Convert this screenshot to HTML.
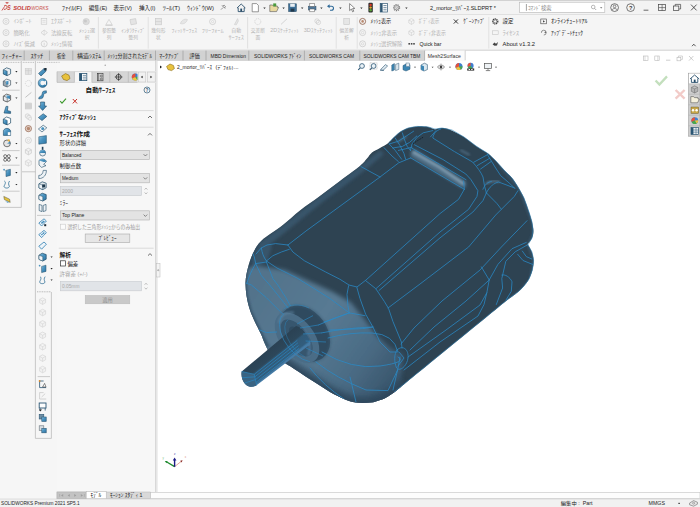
<!DOCTYPE html>
<html lang="ja">
<head>
<meta charset="utf-8">
<title>SOLIDWORKS Premium 2021 - 2_mortor_ﾘﾊﾞｰｽ.SLDPRT</title>
<style>
html,body{margin:0;padding:0;background:#fff;}
body{width:700px;height:507px;overflow:hidden;position:relative;font-family:"Liberation Sans", "Noto Sans CJK JP", sans-serif;}
#app{position:absolute;left:0;top:0;width:700px;height:507px;display:block;}
#app text{font-family:"Liberation Sans", "Noto Sans CJK JP", sans-serif;white-space:pre;}
</style>
</head>
<body>
<svg id="app" width="700" height="507" viewBox="0 0 700 507">
<defs><linearGradient id="gb" x1="0" y1="0" x2="1" y2="1"><stop offset="0" stop-color="#8cc3e2"/><stop offset="0.45" stop-color="#4a93c0"/><stop offset="1" stop-color="#2d74a2"/></linearGradient></defs>
<rect x="0" y="0" width="700" height="507" fill="#ffffff" />
<rect x="0" y="0" width="700" height="15" fill="#f3f3f3" />
<line x1="0" y1="0.4" x2="700" y2="0.4" stroke="#c4c4c4" stroke-width="0.8" />
<line x1="0" y1="14.8" x2="700" y2="14.8" stroke="#cfcfcf" stroke-width="0.8" />
<rect x="0" y="15.2" width="700" height="35" fill="#f5f5f5" />
<line x1="0" y1="50.2" x2="700" y2="50.2" stroke="#bdbdbd" stroke-width="0.7" />
<path d="M1.9 10.5 L4.7 6.3" fill="none" stroke="#c53a35" stroke-width="0.8" />
<path d="M4.3 5.6 L5.9 5.4 C7.5 5.5 7.5 8.9 5.3 9.2 L3.9 9.4" fill="none" stroke="#c53a35" stroke-width="0.9" />
<path d="M5.3 2.2 L8.7 2.2 L8 3.5 L6.3 3.5 Z" fill="#c53a35" />
<text x="7.2" y="9.8" font-size="6.4" fill="#c53a35" font-weight="bold" textLength="3.4" lengthAdjust="spacingAndGlyphs" font-style="italic">S</text>
<text x="13.2" y="9.61" font-size="5.3" fill="#c53a35" font-weight="bold" textLength="17.6" lengthAdjust="spacingAndGlyphs" font-style="italic">SOLID</text>
<text x="31.3" y="9.61" font-size="5.3" fill="#c9514c" textLength="17.2" lengthAdjust="spacingAndGlyphs" font-style="italic">WORKS</text>
<text x="61.8" y="10.03" font-size="6.2" fill="#1d1d1d" textLength="20.4" lengthAdjust="spacingAndGlyphs" >ﾌｧｲﾙ(F)</text>
<text x="88.8" y="10.03" font-size="6.2" fill="#1d1d1d" textLength="18.4" lengthAdjust="spacingAndGlyphs" >編集(E)</text>
<text x="113.5" y="10.03" font-size="6.2" fill="#1d1d1d" textLength="18.4" lengthAdjust="spacingAndGlyphs" >表示(V)</text>
<text x="139" y="10.03" font-size="6.2" fill="#1d1d1d" textLength="16.4" lengthAdjust="spacingAndGlyphs" >挿入(I)</text>
<text x="162.8" y="10.03" font-size="6.2" fill="#1d1d1d" textLength="17.4" lengthAdjust="spacingAndGlyphs" >ﾂｰﾙ(T)</text>
<text x="187" y="10.03" font-size="6.2" fill="#1d1d1d" textLength="27" lengthAdjust="spacingAndGlyphs" >ｳｨﾝﾄﾞｳ(W)</text>
<path d="M221 9.6 L223 7.6 M222 5.4 L225.2 8.6 M222.6 6 L224.2 5.2 L225.4 6.4 L224.6 8" fill="none" stroke="#555" stroke-width="0.6" />
<path d="M237.2 7.8 L241.2 4 L245.2 7.8 L244.2 7.8 L244.2 11.6 L238.2 11.6 L238.2 7.8 Z" fill="#f3f3f3" stroke="#2b4f6b" stroke-width="0.9" />
<rect x="240.3" y="8.6" width="1.8" height="3" fill="#2b4f6b" />
<path d="M252.2 3.6 L256.6 3.6 L258.4 5.4 L258.4 11.8 L252.2 11.8 Z" fill="#fff" stroke="#555" stroke-width="0.6" />
<path d="M263.3 7.6 L265.7 7.6 L264.5 9.0 Z" fill="#333" />
<path d="M269.8 11.6 L269.8 5 L272.6 5 L273.4 6 L277.4 6 L277.4 7.4 L278.6 7.4 L276.6 11.6 Z" fill="#e9d9a0" stroke="#555" stroke-width="0.6" />
<path d="M273.2 3.4 L276.2 3.4 L276.2 6.4 L273.2 6.4 Z" fill="#4c9a3c" />
<path d="M282.40000000000003 7.6 L284.8 7.6 L283.6 9.0 Z" fill="#333" />
<rect x="288.6" y="3.8" width="7.8" height="7.8" fill="#3c6f97" stroke="#27475f" stroke-width="0.5" />
<rect x="290.2" y="3.8" width="4.6" height="3" fill="#e8eef3" />
<rect x="290.6" y="8.6" width="3.8" height="3" fill="#20384b" />
<path d="M301.0 7.6 L303.4 7.6 L302.2 9.0 Z" fill="#333" />
<rect x="308.4" y="6.2" width="7.6" height="3.8" fill="#50789a" stroke="#2f4d66" stroke-width="0.5" />
<rect x="309.8" y="3.6" width="4.8" height="2.8" fill="#fff" stroke="#555" stroke-width="0.5" />
<rect x="309.8" y="9" width="4.8" height="2.8" fill="#fff" stroke="#555" stroke-width="0.5" />
<path d="M320.2 7.6 L322.59999999999997 7.6 L321.4 9.0 Z" fill="#333" />
<path d="M328 6.2 L331.4 6.2 C334.2 6.2 334.2 10.2 331.4 10.2 L330 10.2" fill="none" stroke="#2f6a99" stroke-width="1.1" />
<path d="M329.6 4.2 L327 6.2 L329.6 8.2 Z" fill="#2f6a99" />
<path d="M339.2 7.6 L341.59999999999997 7.6 L340.4 9.0 Z" fill="#333" />
<path d="M349.6 3.6 L349.6 10.6 L351.4 9 L352.6 11.8 L353.8 11.2 L352.6 8.6 L354.8 8.4 Z" fill="#fff" stroke="#444" stroke-width="0.6" />
<path d="M360.2 7.6 L362.59999999999997 7.6 L361.4 9.0 Z" fill="#333" />
<rect x="368.4" y="2.8" width="4.4" height="9.6" fill="#2d2d2d" rx="1" />
<circle cx="370.6" cy="5" r="1.2" fill="#d93a2b" />
<circle cx="370.6" cy="7.6" r="1.2" fill="#e0a32a" />
<circle cx="370.6" cy="10.2" r="1.2" fill="#58a33a" />
<rect x="380.2" y="3.4" width="7.2" height="8.6" fill="#fff" stroke="#2f5673" stroke-width="0.7" />
<rect x="380.2" y="3.4" width="2.4" height="8.6" fill="#2f5673" />
<line x1="383.4" y1="5.6" x2="386.6" y2="5.6" stroke="#2f5673" stroke-width="0.7" />
<line x1="383.4" y1="7.7" x2="386.6" y2="7.7" stroke="#2f5673" stroke-width="0.7" />
<line x1="383.4" y1="9.8" x2="386.6" y2="9.8" stroke="#2f5673" stroke-width="0.7" />
<circle cx="396.6" cy="7.7" r="3" fill="none" stroke="#7a7a7a" stroke-width="1.2" stroke-dasharray="1.2 0.9"/>
<circle cx="396.6" cy="7.7" r="2.2" fill="#f3f3f3" stroke="#7a7a7a" stroke-width="0.7" />
<circle cx="396.6" cy="7.7" r="0.9" fill="none" stroke="#7a7a7a" stroke-width="0.5" />
<path d="M405.2 7.6 L407.59999999999997 7.6 L406.4 9.0 Z" fill="#333" />
<text x="430" y="10.13" font-size="6.2" fill="#222" textLength="66" lengthAdjust="spacingAndGlyphs" >2_mortor_ﾘﾊﾞｰｽ.SLDPRT *</text>
<rect x="519.4" y="2.2" width="85.4" height="10.2" fill="#ffffff" stroke="#b5b5b5" stroke-width="0.6" />
<line x1="526.4" y1="4" x2="526.4" y2="10.8" stroke="#444" stroke-width="0.5" />
<text x="528" y="9.62" font-size="5.6" fill="#8a8a8a" textLength="23.5" lengthAdjust="spacingAndGlyphs" >ｺﾏﾝﾄﾞ検索</text>
<circle cx="593.2" cy="7" r="1.8" fill="none" stroke="#8a8a8a" stroke-width="0.6" />
<line x1="594.5" y1="8.3" x2="596.2" y2="10" stroke="#8a8a8a" stroke-width="0.7" />
<path d="M600.0 7.2 L602.4000000000001 7.2 L601.2 8.6 Z" fill="#666" />
<circle cx="614.6" cy="7.6" r="3.9" fill="none" stroke="#444" stroke-width="0.7" />
<circle cx="614.6" cy="6.4" r="1.3" fill="none" stroke="#444" stroke-width="0.6" />
<path d="M612.2 10 C612.6 8 616.6 8 617 10" fill="none" stroke="#444" stroke-width="0.6" />
<circle cx="630.6" cy="7.6" r="3.9" fill="none" stroke="#444" stroke-width="0.7" />
<text x="630.6" y="9.82" font-size="5.6" fill="#333" text-anchor="middle" font-weight="bold" >?</text>
<line x1="643.6" y1="10.2" x2="648.4" y2="10.2" stroke="#444" stroke-width="0.8" />
<rect x="658.6" y="4.6" width="7" height="6" fill="none" stroke="#444" stroke-width="0.7" />
<line x1="662.1" y1="4.6" x2="662.1" y2="10.6" stroke="#444" stroke-width="0.6" />
<line x1="658.6" y1="7.6" x2="665.6" y2="7.6" stroke="#444" stroke-width="0.6" />
<rect x="673.6" y="6" width="5.2" height="4.6" fill="#f3f3f3" stroke="#444" stroke-width="0.7" />
<path d="M675.2 6 L675.2 4.4 L680.6 4.4 L680.6 9 L678.8 9" fill="none" stroke="#444" stroke-width="0.7" />
<path d="M691 4.6 L696.6 10.4 M696.6 4.6 L691 10.4" fill="none" stroke="#333" stroke-width="0.8" />
<circle cx="6" cy="21.4" r="3" fill="none" stroke="#c6c6c6" stroke-width="0.7" />
<circle cx="6" cy="21.4" r="1.2" fill="none" stroke="#c6c6c6" stroke-width="0.5" />
<text x="13.4" y="23.31" font-size="5.3" fill="#b4b4b4" textLength="18.2" lengthAdjust="spacingAndGlyphs" >ｲﾝﾎﾟｰﾄ</text>
<circle cx="6" cy="32.6" r="3" fill="none" stroke="#c6c6c6" stroke-width="0.7" />
<circle cx="6" cy="32.6" r="1.2" fill="none" stroke="#c6c6c6" stroke-width="0.5" />
<text x="13.4" y="34.51" font-size="5.3" fill="#b4b4b4" textLength="16.4" lengthAdjust="spacingAndGlyphs" >簡略化</text>
<circle cx="6" cy="43.8" r="3" fill="none" stroke="#c6c6c6" stroke-width="0.7" />
<circle cx="6" cy="43.8" r="1.2" fill="none" stroke="#c6c6c6" stroke-width="0.5" />
<text x="13.4" y="45.71" font-size="5.3" fill="#b4b4b4" textLength="21.5" lengthAdjust="spacingAndGlyphs" >ﾉｲｽﾞ低減</text>
<rect x="41.2" y="18.6" width="5.6" height="5.6" fill="none" stroke="#c6c6c6" stroke-width="0.6" />
<line x1="42.4" y1="20.4" x2="45.6" y2="20.4" stroke="#c6c6c6" stroke-width="0.5" />
<line x1="42.4" y1="22.2" x2="45.6" y2="22.2" stroke="#c6c6c6" stroke-width="0.5" />
<path d="M41 32.6 L44.2 30 L47.4 32.6 L44.2 35.2 Z" fill="none" stroke="#c6c6c6" stroke-width="0.6" />
<line x1="44.2" y1="30" x2="44.2" y2="35.2" stroke="#c6c6c6" stroke-width="0.5" />
<circle cx="44.2" cy="43.8" r="3" fill="none" stroke="#c6c6c6" stroke-width="0.7" />
<line x1="44.2" y1="42.8" x2="44.2" y2="45.6" stroke="#c6c6c6" stroke-width="0.6" />
<text x="51" y="23.31" font-size="5.3" fill="#b4b4b4" textLength="20.6" lengthAdjust="spacingAndGlyphs" >ｴｸｽﾎﾟｰﾄ</text>
<text x="51" y="34.51" font-size="5.3" fill="#b4b4b4" textLength="21.4" lengthAdjust="spacingAndGlyphs" >法線反転</text>
<text x="51" y="45.71" font-size="5.3" fill="#b4b4b4" textLength="21.4" lengthAdjust="spacingAndGlyphs" >ﾒｯｼｭ情報</text>
<circle cx="86.2" cy="21.6" r="3.2" fill="#dcdcdc" stroke="#c6c6c6" stroke-width="0.5" />
<circle cx="85.4" cy="21" r="1.6" fill="#c9c9c9" />
<text x="87" y="32.4" font-size="5.0" fill="#b4b4b4" text-anchor="middle" textLength="16.1" lengthAdjust="spacingAndGlyphs" >ﾒｯｼｭ選</text>
<text x="87" y="38.5" font-size="5.0" fill="#b4b4b4" text-anchor="middle" textLength="4.7" lengthAdjust="spacingAndGlyphs" >択</text>
<line x1="98.4" y1="17" x2="98.4" y2="48.6" stroke="#d9d9d9" stroke-width="0.7" />
<path d="M105.8 24.8 L112.2 24.8 L109 19.4 Z" fill="none" stroke="#c6c6c6" stroke-width="0.6" />
<line x1="105.4" y1="25.4" x2="112.6" y2="25.4" stroke="#c6c6c6" stroke-width="0.7" />
<text x="109" y="32.4" font-size="5.0" fill="#b4b4b4" text-anchor="middle" textLength="14.1" lengthAdjust="spacingAndGlyphs" >参照整</text>
<text x="109" y="38.5" font-size="5.0" fill="#b4b4b4" text-anchor="middle" textLength="4.7" lengthAdjust="spacingAndGlyphs" >列</text>
<path d="M130 19.6 L135.6 18.6 L136.6 23.8 L131 24.8 Z" fill="#e4e4e4" stroke="#c6c6c6" stroke-width="0.6" />
<text x="133.2" y="32.4" font-size="5.0" fill="#b4b4b4" text-anchor="middle" textLength="23.7" lengthAdjust="spacingAndGlyphs" >ｲﾝﾀﾗｸﾃｨﾌﾞ</text>
<text x="133.2" y="38.5" font-size="5.0" fill="#b4b4b4" text-anchor="middle" textLength="9.5" lengthAdjust="spacingAndGlyphs" >整列</text>
<line x1="148.2" y1="17" x2="148.2" y2="48.6" stroke="#d9d9d9" stroke-width="0.7" />
<rect x="155.4" y="18.4" width="6" height="6.4" fill="#e6e6e6" stroke="#c6c6c6" stroke-width="0.6" />
<line x1="155.4" y1="21.6" x2="161.4" y2="21.6" stroke="#c6c6c6" stroke-width="0.5" />
<text x="158.4" y="32.4" font-size="5.0" fill="#b4b4b4" text-anchor="middle" textLength="14.1" lengthAdjust="spacingAndGlyphs" >幾何形</text>
<text x="158.4" y="38.5" font-size="5.0" fill="#b4b4b4" text-anchor="middle" textLength="4.7" lengthAdjust="spacingAndGlyphs" >状</text>
<path d="M180.4 23.6 C181.4 19.6 185.4 18.6 187.4 19.6 C186.4 22.6 184 24.6 180.4 23.6 Z" fill="#e6e6e6" stroke="#c6c6c6" stroke-width="0.5" />
<text x="184.3" y="32.4" font-size="5.0" fill="#b4b4b4" text-anchor="middle" textLength="25.7" lengthAdjust="spacingAndGlyphs" >ﾌｨｯﾄｻｰﾌｪｽ</text>
<circle cx="212.6" cy="21.6" r="3" fill="none" stroke="#c6c6c6" stroke-width="0.7" />
<circle cx="212.6" cy="21.6" r="1.1" fill="none" stroke="#c6c6c6" stroke-width="0.5" />
<text x="212.7" y="32.4" font-size="5.0" fill="#b4b4b4" text-anchor="middle" textLength="21.8" lengthAdjust="spacingAndGlyphs" >ﾌﾘｰﾌｫｰﾑ</text>
<path d="M234.4 24.6 L237.6 18.6 L238.4 21 L236.4 24.8 Z" fill="#e6e6e6" stroke="#c6c6c6" stroke-width="0.5" />
<text x="236.2" y="32.4" font-size="5.0" fill="#b4b4b4" text-anchor="middle" textLength="9.8" lengthAdjust="spacingAndGlyphs" >自動</text>
<text x="236.2" y="38.5" font-size="5.0" fill="#b4b4b4" text-anchor="middle" textLength="15.5" lengthAdjust="spacingAndGlyphs" >ｻｰﾌｪｽ</text>
<line x1="247.6" y1="17" x2="247.6" y2="48.6" stroke="#d9d9d9" stroke-width="0.7" />
<circle cx="257.8" cy="21.6" r="3" fill="none" stroke="#c6c6c6" stroke-width="0.7" stroke-dasharray="1.1 0.9"/>
<text x="257.8" y="32.4" font-size="5.0" fill="#b4b4b4" text-anchor="middle" textLength="14.1" lengthAdjust="spacingAndGlyphs" >交差断</text>
<text x="257.8" y="38.5" font-size="5.0" fill="#b4b4b4" text-anchor="middle" textLength="4.7" lengthAdjust="spacingAndGlyphs" >面</text>
<line x1="281" y1="24.4" x2="287" y2="18.8" stroke="#c6c6c6" stroke-width="0.7" />
<text x="284.6" y="32.4" font-size="5.0" fill="#b4b4b4" text-anchor="middle" textLength="28.6" lengthAdjust="spacingAndGlyphs" >2Dｽｹｯﾁﾌｨｯﾄ</text>
<circle cx="317" cy="21" r="2.2" fill="none" stroke="#c6c6c6" stroke-width="0.6" />
<circle cx="318.4" cy="22.4" r="2.2" fill="none" stroke="#c6c6c6" stroke-width="0.6" />
<text x="318.4" y="32.4" font-size="5.0" fill="#b4b4b4" text-anchor="middle" textLength="29.2" lengthAdjust="spacingAndGlyphs" >3Dｽｹｯﾁﾌｨｯﾄ</text>
<line x1="336.2" y1="17" x2="336.2" y2="48.6" stroke="#d9d9d9" stroke-width="0.7" />
<rect x="343.8" y="18.6" width="5.6" height="6" fill="#e6e6e6" stroke="#c6c6c6" stroke-width="0.6" />
<text x="346.6" y="32.4" font-size="5.0" fill="#b4b4b4" text-anchor="middle" textLength="14.1" lengthAdjust="spacingAndGlyphs" >偏差解</text>
<text x="346.6" y="38.5" font-size="5.0" fill="#b4b4b4" text-anchor="middle" textLength="4.7" lengthAdjust="spacingAndGlyphs" >析</text>
<line x1="357.2" y1="17" x2="357.2" y2="48.6" stroke="#d9d9d9" stroke-width="0.7" />
<circle cx="362.6" cy="21.4" r="3" fill="none" stroke="#8a5a44" stroke-width="0.8" />
<circle cx="362.6" cy="21.4" r="1.3" fill="#b98a70" />
<text x="370.6" y="23.42" font-size="5.6" fill="#222222" textLength="20.6" lengthAdjust="spacingAndGlyphs" >ﾒｯｼｭ表示</text>
<circle cx="362.6" cy="32.6" r="3" fill="none" stroke="#c6c6c6" stroke-width="0.7" />
<circle cx="362.6" cy="32.6" r="1.2" fill="none" stroke="#c6c6c6" stroke-width="0.5" />
<text x="370.6" y="34.62" font-size="5.6" fill="#b4b4b4" textLength="26.4" lengthAdjust="spacingAndGlyphs" >ﾒｯｼｭ非表示</text>
<circle cx="362.6" cy="43.8" r="3" fill="none" stroke="#c6c6c6" stroke-width="0.7" />
<circle cx="362.6" cy="43.8" r="1.2" fill="none" stroke="#c6c6c6" stroke-width="0.5" />
<text x="370.6" y="45.82" font-size="5.6" fill="#b4b4b4" textLength="31.6" lengthAdjust="spacingAndGlyphs" >ﾒｯｼｭ選択解除</text>
<path d="M408.79999999999995 20.0 L411.4 18.599999999999998 L414.0 20.0 L414.0 23.0 L411.4 24.4 L408.79999999999995 23.0 Z M408.79999999999995 20.0 L411.4 21.4 L414.0 20.0 M411.4 21.4 L411.4 24.4" fill="none" stroke="#c6c6c6" stroke-width="0.5" />
<text x="418.8" y="23.42" font-size="5.6" fill="#b4b4b4" textLength="20.6" lengthAdjust="spacingAndGlyphs" >ﾎﾞﾃﾞｨ表示</text>
<path d="M408.79999999999995 31.200000000000003 L411.4 29.8 L414.0 31.200000000000003 L414.0 34.2 L411.4 35.6 L408.79999999999995 34.2 Z M408.79999999999995 31.200000000000003 L411.4 32.6 L414.0 31.200000000000003 M411.4 32.6 L411.4 35.6" fill="none" stroke="#c6c6c6" stroke-width="0.5" />
<text x="418.8" y="34.62" font-size="5.6" fill="#b4b4b4" textLength="27" lengthAdjust="spacingAndGlyphs" >ﾎﾞﾃﾞｨ非表示</text>
<rect x="408.4" y="43.2" width="1.6" height="1.3" fill="#222" />
<rect x="410.8" y="43.2" width="1.6" height="1.3" fill="#222" />
<rect x="413.2" y="43.2" width="1.6" height="1.3" fill="#222" />
<text x="419.4" y="45.89" font-size="5.8" fill="#222222" textLength="22" lengthAdjust="spacingAndGlyphs" >Quick bar</text>
<path d="M453.8 19.4 L458 23.6 M458 19.4 L453.8 23.6" fill="none" stroke="#222" stroke-width="0.9" />
<text x="463.2" y="23.42" font-size="5.6" fill="#222222" textLength="22" lengthAdjust="spacingAndGlyphs" >ｹﾞｰﾝｱｯﾌﾟ</text>
<line x1="488.8" y1="17" x2="488.8" y2="48.6" stroke="#d9d9d9" stroke-width="0.7" />
<circle cx="495.2" cy="21.4" r="2.6" fill="none" stroke="#333" stroke-width="1.2" stroke-dasharray="1.1 0.8"/>
<circle cx="495.2" cy="21.4" r="1.7" fill="#f5f5f5" stroke="#333" stroke-width="0.6" />
<text x="502.6" y="23.42" font-size="5.6" fill="#222222" textLength="10.8" lengthAdjust="spacingAndGlyphs" >設定</text>
<rect x="492.4" y="30.8" width="5.8" height="3.6" fill="none" stroke="#c6c6c6" stroke-width="0.6" />
<text x="502.6" y="34.62" font-size="5.6" fill="#b4b4b4" textLength="16.4" lengthAdjust="spacingAndGlyphs" >ﾗｲｾﾝｽ</text>
<path d="M492.6 44.6 L494.4 42.4 L496 43.8 L498 42 L497 45.6 L494.6 45.8 Z" fill="#444" />
<text x="502.6" y="45.89" font-size="5.8" fill="#222222" textLength="32.4" lengthAdjust="spacingAndGlyphs" >About v1.3.2</text>
<rect x="540.8" y="19" width="5.8" height="4.8" fill="none" stroke="#444" stroke-width="0.6" />
<path d="M543 20.2 L545 21.4 L543 22.6 Z" fill="#444" />
<text x="551" y="23.42" font-size="5.6" fill="#222222" textLength="36.6" lengthAdjust="spacingAndGlyphs" >ｵﾝﾗｲﾝﾁｭｰﾄﾘｱﾙ</text>
<path d="M541.4 32.8 A2.4 2.4 0 1 1 543.8 35" fill="none" stroke="#666" stroke-width="0.7" />
<path d="M545.2 31 L546.4 33 L544.4 33 Z" fill="#666" />
<text x="551" y="34.62" font-size="5.6" fill="#222222" textLength="32" lengthAdjust="spacingAndGlyphs" >ｱｯﾌﾟﾃﾞｰﾄﾁｪｯｸ</text>
<path d="M692 46.2 L693.8 44.2 L695.6 46.2" fill="none" stroke="#333" stroke-width="0.8" />
<rect x="0" y="50.6" width="425" height="9.8" fill="#d2d2d2" />
<line x1="0" y1="60.5" x2="425" y2="60.5" stroke="#bdbdbd" stroke-width="0.5" />
<line x1="24.2" y1="50.6" x2="24.2" y2="60.4" stroke="#9e9e9e" stroke-width="0.7" />
<text x="1.6" y="57.72" font-size="5.6" fill="#1c1c1c" textLength="20.4" lengthAdjust="spacingAndGlyphs" >ﾌｨｰﾁｬｰ</text>
<line x1="49.4" y1="50.6" x2="49.4" y2="60.4" stroke="#9e9e9e" stroke-width="0.7" />
<text x="30.6" y="57.72" font-size="5.6" fill="#1c1c1c" textLength="12.6" lengthAdjust="spacingAndGlyphs" >ｽｹｯﾁ</text>
<line x1="72.8" y1="50.6" x2="72.8" y2="60.4" stroke="#9e9e9e" stroke-width="0.7" />
<text x="57" y="57.72" font-size="5.6" fill="#1c1c1c" textLength="8.6" lengthAdjust="spacingAndGlyphs" >板金</text>
<line x1="104.2" y1="50.6" x2="104.2" y2="60.4" stroke="#9e9e9e" stroke-width="0.7" />
<text x="77" y="57.72" font-size="5.6" fill="#1c1c1c" textLength="24.2" lengthAdjust="spacingAndGlyphs" >構造ｼｽﾃﾑ</text>
<line x1="155.5" y1="50.6" x2="155.5" y2="60.4" stroke="#9e9e9e" stroke-width="0.7" />
<text x="107.6" y="57.72" font-size="5.6" fill="#1c1c1c" textLength="44.4" lengthAdjust="spacingAndGlyphs" >ﾒｯｼｭ分割されたﾓﾃﾞﾙ</text>
<line x1="183" y1="50.6" x2="183" y2="60.4" stroke="#9e9e9e" stroke-width="0.7" />
<text x="159.2" y="57.72" font-size="5.6" fill="#1c1c1c" textLength="20.4" lengthAdjust="spacingAndGlyphs" >ﾏｰｸｱｯﾌﾟ</text>
<line x1="206" y1="50.6" x2="206" y2="60.4" stroke="#9e9e9e" stroke-width="0.7" />
<text x="189.3" y="57.72" font-size="5.6" fill="#1c1c1c" textLength="10.5" lengthAdjust="spacingAndGlyphs" >評価</text>
<line x1="248.8" y1="50.6" x2="248.8" y2="60.4" stroke="#9e9e9e" stroke-width="0.7" />
<text x="210.6" y="57.72" font-size="5.6" fill="#1c1c1c" textLength="35.4" lengthAdjust="spacingAndGlyphs" >MBD Dimension</text>
<line x1="304.4" y1="50.6" x2="304.4" y2="60.4" stroke="#9e9e9e" stroke-width="0.7" />
<text x="254" y="57.72" font-size="5.6" fill="#1c1c1c" textLength="47.3" lengthAdjust="spacingAndGlyphs" >SOLIDWORKS ｱﾄﾞｲﾝ</text>
<line x1="359.8" y1="50.6" x2="359.8" y2="60.4" stroke="#9e9e9e" stroke-width="0.7" />
<text x="309" y="57.72" font-size="5.6" fill="#1c1c1c" textLength="45" lengthAdjust="spacingAndGlyphs" >SOLIDWORKS CAM</text>
<line x1="424.8" y1="50.6" x2="424.8" y2="60.4" stroke="#9e9e9e" stroke-width="0.7" />
<text x="363.5" y="57.72" font-size="5.6" fill="#1c1c1c" textLength="56.9" lengthAdjust="spacingAndGlyphs" >SOLIDWORKS CAM TBM</text>
<rect x="425.3" y="50.6" width="39.8" height="10.4" fill="#fbfbfb" />
<line x1="465.2" y1="50.6" x2="465.2" y2="60.4" stroke="#b5b5b5" stroke-width="0.6" />
<text x="427.8" y="57.72" font-size="5.6" fill="#333" textLength="33" lengthAdjust="spacingAndGlyphs" >Mesh2Surface</text>
<rect x="0" y="60.8" width="157" height="438" fill="#f6f6f6" />
<line x1="1" y1="62.4" x2="20.4" y2="62.4" stroke="#9a9a9a" stroke-width="0.6" stroke-dasharray="1 0.7"/>
<line x1="22.8" y1="62.4" x2="34.6" y2="62.4" stroke="#9a9a9a" stroke-width="0.6" stroke-dasharray="1 0.7"/>
<line x1="37.2" y1="62.4" x2="60" y2="62.4" stroke="#9a9a9a" stroke-width="0.6" stroke-dasharray="1 0.7"/>
<line x1="21.3" y1="61" x2="21.3" y2="207.4" stroke="#b4b4b4" stroke-width="0.7" />
<line x1="0" y1="207.4" x2="21.3" y2="207.4" stroke="#b4b4b4" stroke-width="0.7" />
<line x1="35.4" y1="61" x2="35.4" y2="438.4" stroke="#b4b4b4" stroke-width="0.7" />
<line x1="22" y1="171.8" x2="35.4" y2="171.8" stroke="#b4b4b4" stroke-width="0.7" />
<line x1="35.4" y1="438.4" x2="51.4" y2="438.4" stroke="#b4b4b4" stroke-width="0.7" />
<line x1="51.4" y1="292" x2="51.4" y2="438.4" stroke="#b4b4b4" stroke-width="0.7" />
<path d="M3.4 69.8 L6.6 67.8 L10.6 69.19999999999999 L10.6 73.8 L7.2 75.6 L3.4 74.0 Z" fill="#e9eef2" stroke="#1f4a66" stroke-width="0.7" />
<path d="M3.4 69.8 L7.2 71.19999999999999 L7.2 75.6 L3.4 74.0 Z" fill="url(#gb)" stroke="#1f4a66" stroke-width="0.5" />
<path d="M15.299999999999999 71.1 L17.5 71.1 L16.4 72.39999999999999 Z" fill="#222" />
<path d="M3.4 81.10000000000001 L6.6 79.10000000000001 L10.6 80.5 L10.6 85.10000000000001 L7.2 86.9 L3.4 85.30000000000001 Z" fill="#e9eef2" stroke="#4a5a66" stroke-width="0.7" />
<path d="M3.4 81.10000000000001 L7.2 82.5 L7.2 86.9 L3.4 85.30000000000001 Z" fill="#9aa7b0" stroke="#4a5a66" stroke-width="0.5" />
<rect x="6" y="81" width="2.4" height="3.4" fill="url(#gb)" />
<path d="M15.299999999999999 82.4 L17.5 82.4 L16.4 83.7 Z" fill="#222" />
<line x1="2" y1="90.2" x2="19.6" y2="90.2" stroke="#b9b9b9" stroke-width="0.7" />
<path d="M3.4 96.10000000000001 L6.6 94.10000000000001 L10.6 95.5 L10.6 100.10000000000001 L7.2 101.9 L3.4 100.30000000000001 Z" fill="#e9eef2" stroke="#333" stroke-width="0.7" />
<path d="M3.4 96.10000000000001 L7.2 97.5 L7.2 101.9 L3.4 100.30000000000001 Z" fill="#e9eef2" stroke="#333" stroke-width="0.5" />
<path d="M6.4 95 L10 96 L10 99 L6.8 98 Z" fill="url(#gb)" />
<path d="M15.299999999999999 97.4 L17.5 97.4 L16.4 98.7 Z" fill="#222" />
<path d="M4 113 L6 106.4 L8 106.4 L7.4 110.6 L10.6 111.4 L10.6 113.4 Z" fill="url(#gb)" stroke="#1f4a66" stroke-width="0.6" />
<path d="M3.4 119.0 L6.6 117.0 L10.6 118.39999999999999 L10.6 123.0 L7.2 124.8 L3.4 123.2 Z" fill="#fff" stroke="#1f4a66" stroke-width="0.7" />
<path d="M3.4 119.0 L7.2 120.39999999999999 L7.2 124.8 L3.4 123.2 Z" fill="url(#gb)" stroke="#1f4a66" stroke-width="0.5" />
<path d="M3.4 135.4 L3.4 130.6 C5 127.6 9 127.6 10.6 130.8 L10.6 135.4 Z" fill="url(#gb)" stroke="#1f4a66" stroke-width="0.6" />
<rect x="7.8" y="132.2" width="2.6" height="3" fill="#fff" />
<circle cx="7" cy="143.4" r="3.4" fill="#e4e4e4" stroke="#444" stroke-width="0.7" />
<path d="M7 143.4 L10 141.4 L10.4 143.8 Z" fill="url(#gb)" />
<circle cx="8.8" cy="140.4" r="1.1" fill="#e9b23a" />
<path d="M15.299999999999999 142.9 L17.5 142.9 L16.4 144.20000000000002 Z" fill="#222" />
<line x1="2" y1="150.6" x2="19.6" y2="150.6" stroke="#b9b9b9" stroke-width="0.7" />
<circle cx="5.2" cy="156.2" r="1.5" fill="none" stroke="#3a3a3a" stroke-width="0.7" />
<circle cx="8.8" cy="156.2" r="1.5" fill="none" stroke="#3a3a3a" stroke-width="0.7" />
<circle cx="5.2" cy="159.8" r="1.5" fill="none" stroke="#3a3a3a" stroke-width="0.7" />
<circle cx="8.8" cy="159.8" r="1.5" fill="none" stroke="#3a3a3a" stroke-width="0.7" />
<path d="M15.299999999999999 157.5 L17.5 157.5 L16.4 158.8 Z" fill="#222" />
<line x1="2" y1="165.2" x2="19.6" y2="165.2" stroke="#b9b9b9" stroke-width="0.7" />
<path d="M6 170.4 L10.4 169.2 L10.4 175.4 L6 176.6 Z" fill="url(#gb)" stroke="#1f4a66" stroke-width="0.5" />
<circle cx="4" cy="169.6" r="0.9" fill="url(#gb)" />
<line x1="5" y1="170.4" x2="6" y2="171.4" stroke="#1f4a66" stroke-width="0.6" />
<path d="M15.299999999999999 172.1 L17.5 172.1 L16.4 173.4 Z" fill="#222" />
<path d="M4.4 181 C6.6 182.4 4.4 185 4 186.4 C4.4 188.6 9 188.6 9.4 186.4 C8.6 184.6 8 183 9.6 181" fill="none" stroke="#2f6e96" stroke-width="0.8" />
<path d="M15.299999999999999 183.9 L17.5 183.9 L16.4 185.20000000000002 Z" fill="#222" />
<line x1="2" y1="191.2" x2="19.6" y2="191.2" stroke="#b9b9b9" stroke-width="0.7" />
<path d="M3.8 196.4 L9.6 199.2 L10.2 202.4 L4.4 199.6 Z" fill="#e5c33a" stroke="#54503a" stroke-width="0.5" />
<path d="M5 201.4 L8.6 203 L8 201.6 Z" fill="url(#gb)" />
<rect x="25.2" y="68.6" width="6.4" height="5.8" fill="#e2e2e2" stroke="#c8c8c8" stroke-width="0.5" />
<line x1="25.2" y1="70.6" x2="31.599999999999998" y2="70.6" stroke="#c8c8c8" stroke-width="0.5" />
<line x1="28.4" y1="68.6" x2="28.4" y2="74.4" stroke="#c8c8c8" stroke-width="0.5" />
<circle cx="28.4" cy="83.4" r="3" fill="none" stroke="#c8c8c8" stroke-width="0.7" stroke-dasharray="1.2 0.9"/>
<line x1="25.4" y1="97.4" x2="31.4" y2="92.4" stroke="#aaa" stroke-width="0.7" />
<rect x="25.2" y="103" width="6.4" height="6" fill="#d8d8d8" stroke="#c8c8c8" stroke-width="0.5" />
<line x1="25.2" y1="105" x2="31.599999999999998" y2="105" stroke="#bbb" stroke-width="0.4" />
<line x1="25.2" y1="107" x2="31.599999999999998" y2="107" stroke="#bbb" stroke-width="0.4" />
<circle cx="27.4" cy="116" r="2.2" fill="#f0f0f0" stroke="#c8c8c8" stroke-width="0.6" />
<circle cx="29.0" cy="117.4" r="2.2" fill="#f0f0f0" stroke="#c8c8c8" stroke-width="0.6" />
<circle cx="30.0" cy="118.8" r="1.6" fill="#f0f0f0" stroke="#c8c8c8" stroke-width="0.5" />
<circle cx="28.4" cy="128.6" r="3.1" fill="#ecd9cf" stroke="#8a5a44" stroke-width="0.7" />
<circle cx="28.4" cy="128.6" r="1.4" fill="#b98a70" stroke="#8a5a44" stroke-width="0.4" />
<circle cx="28.4" cy="140.3" r="3" fill="none" stroke="#c8c8c8" stroke-width="0.7" />
<circle cx="28.4" cy="140.3" r="1.2" fill="none" stroke="#c8c8c8" stroke-width="0.5" />
<path d="M25.4 149.8 L28.4 148.20000000000002 L31.4 149.8 L31.4 153.20000000000002 L28.4 154.8 L25.4 153.20000000000002 Z M25.4 149.8 L28.4 151.4 L31.4 149.8 M28.4 151.4 L28.4 154.8" fill="#f1f1f1" stroke="#c4c4c4" stroke-width="0.6" />
<path d="M25.4 161.20000000000002 L28.4 159.60000000000002 L31.4 161.20000000000002 L31.4 164.60000000000002 L28.4 166.20000000000002 L25.4 164.60000000000002 Z M25.4 161.20000000000002 L28.4 162.8 L31.4 161.20000000000002 M28.4 162.8 L28.4 166.20000000000002" fill="#f1f1f1" stroke="#cfcfcf" stroke-width="0.6" />
<path d="M38.6 73.4 L44.0 68.6 L46.2 71 L41.0 76 Z" fill="url(#gb)" stroke="#1f4a66" stroke-width="0.6" />
<rect x="44.2" y="68" width="2.4" height="2.4" fill="#1c2c38" />
<circle cx="42.6" cy="83" r="3.4" fill="none" stroke="url(#gb)" stroke-width="2.2" />
<circle cx="42.6" cy="83" r="4.4" fill="none" stroke="#1f4a66" stroke-width="0.5" />
<path d="M41.6 83 L46.0 80.6 L46.0 85 Z" fill="#f6f6f6" />
<path d="M38.800000000000004 97.6 L40.6 96 C43.0 96 41.2 91.2 44.0 91 L46.4 90.8 L46.4 93 L44.6 93.4 C43.0 94 44.2 98 41.6 98.6 L38.800000000000004 99 Z" fill="url(#gb)" stroke="#1f4a66" stroke-width="0.5" />
<path d="M40.6 102 L44.6 102 L44.6 106 L46.6 106 L42.6 110.4 L38.6 106 L40.6 106 Z" fill="url(#gb)" stroke="#1f4a66" stroke-width="0.6" />
<path d="M38.4 117.6 L43.2 113.8 L46.800000000000004 116.4 L42.0 120.6 Z" fill="url(#gb)" stroke="#1f4a66" stroke-width="0.6" />
<path d="M38.4 129 L43.2 125.2 L46.800000000000004 127.8 L42.0 132 Z" fill="#f0f4f7" stroke="#1f4a66" stroke-width="0.6" />
<circle cx="42.6" cy="128.6" r="1.5" fill="url(#gb)" />
<path d="M38.800000000000004 136.8 L46.4 135.6 L46.4 143.2 L38.800000000000004 144.2 Z" fill="url(#gb)" stroke="#1f4a66" stroke-width="0.5" />
<circle cx="42.6" cy="153" r="3" fill="#e9eef2" stroke="#1f4a66" stroke-width="0.6" />
<path d="M39.6 153 A3 3 0 0 1 45.6 153 Z" fill="url(#gb)" />
<rect x="41.800000000000004" y="146.8" width="1.6" height="3" fill="#26445a" />
<path d="M39.0 160.4 C41.6 158 45.6 159 46.4 161.6 L43.6 164.4 L46.0 165.6 L41.6 167.4 L39.0 165 Z" fill="#eef2f5" stroke="#1f4a66" stroke-width="0.6" />
<path d="M39.0 160.4 C41.6 158 45.6 159 46.4 161.6 L44.0 162 Z" fill="url(#gb)" />
<path d="M38.800000000000004 178.6 L38.800000000000004 175.4 C41.6 175.6 43.0 173.4 43.2 170.4 L46.4 170.4 C46.4 175 43.6 178.6 38.800000000000004 178.6 Z" fill="#eef2f5" stroke="#1f4a66" stroke-width="0.6" />
<path d="M39.0 183.79999999999998 L42.2 181.79999999999998 L46.2 183.2 L46.2 187.79999999999998 L42.800000000000004 189.6 L39.0 188.0 Z" fill="#dfe6ea" stroke="#1f4a66" stroke-width="0.7" />
<path d="M39.0 183.79999999999998 L42.800000000000004 185.2 L42.800000000000004 189.6 L39.0 188.0 Z" fill="#eef2f5" stroke="#1f4a66" stroke-width="0.5" />
<rect x="42.2" y="184.4" width="3" height="3" fill="#1e394c" />
<path d="M39.0 195.2 L42.2 193.2 L46.2 194.6 L46.2 199.2 L42.800000000000004 201 L39.0 199.4 Z" fill="url(#gb)" stroke="#1f4a66" stroke-width="0.7" />
<path d="M39.0 195.2 L42.800000000000004 196.6 L42.800000000000004 201 L39.0 199.4 Z" fill="#eef2f5" stroke="#1f4a66" stroke-width="0.5" />
<path d="M39.2 204.4 L42.0 205.4 L42.0 211.6 L39.2 210.6 Z M46.0 204.4 L43.2 205.4 L43.2 211.6 L46.0 210.6 Z" fill="#eef2f5" stroke="#1f4a66" stroke-width="0.6" />
<line x1="37" y1="215.4" x2="51" y2="215.4" stroke="#b9b9b9" stroke-width="0.7" />
<path d="M38.800000000000004 223.0 L44.0 218.8 L46.4 221.0 L41.6 226.0 Z" fill="#edf4f9" stroke="#2f7fb2" stroke-width="0.8" />
<path d="M40.800000000000004 222.8 L43.800000000000004 220.4 L44.800000000000004 221.4 L41.800000000000004 224.0 Z" fill="url(#gb)" />
<rect x="44.2" y="224.2" width="2" height="2" fill="#1c2c38" />
<path d="M38.800000000000004 234.6 L44.0 230.4 L46.4 232.6 L41.6 237.6 Z" fill="#edf4f9" stroke="#2f7fb2" stroke-width="0.8" />
<path d="M40.800000000000004 234.4 L43.800000000000004 232 L44.800000000000004 233 L41.800000000000004 235.6 Z" fill="url(#gb)" />
<path d="M39.6 231 L44.6 236" fill="none" stroke="#fff" stroke-width="0.5" />
<path d="M38.800000000000004 246.2 L44.0 242.0 L46.4 244.2 L41.6 249.2 Z" fill="#edf4f9" stroke="#2f7fb2" stroke-width="0.8" />
<path d="M40.800000000000004 246.0 L43.800000000000004 243.6 L44.800000000000004 244.6 L41.800000000000004 247.2 Z" fill="#f0f4f7" />
<path d="M39.0 255.2 L42.2 253.2 L46.2 254.6 L46.2 259.2 L42.800000000000004 261 L39.0 259.4 Z" fill="url(#gb)" stroke="#1f4a66" stroke-width="0.7" />
<path d="M39.0 255.2 L42.800000000000004 256.6 L42.800000000000004 261 L39.0 259.4 Z" fill="#eef2f5" stroke="#1f4a66" stroke-width="0.5" />
<path d="M50.5 256.5 L52.7 256.5 L51.6 257.8 Z" fill="#222" />
<path d="M41.6 266.4 L46.0 265.2 L46.0 271.4 L41.6 272.6 Z" fill="url(#gb)" stroke="#1f4a66" stroke-width="0.5" />
<circle cx="39.6" cy="265.6" r="0.9" fill="url(#gb)" />
<path d="M50.5 268.1 L52.7 268.1 L51.6 269.40000000000003 Z" fill="#222" />
<path d="M40.0 276.6 C42.2 278 40.0 280.6 39.6 282 C40.0 284.2 44.6 284.2 45.0 282 C44.2 280.2 43.6 278.6 45.2 276.6" fill="none" stroke="#2f6e96" stroke-width="0.8" />
<path d="M50.5 279.5 L52.7 279.5 L51.6 280.8 Z" fill="#222" />
<line x1="37" y1="291.8" x2="51" y2="291.8" stroke="#8c8c8c" stroke-width="0.6" stroke-dasharray="1 0.7"/>
<path d="M39.6 299.4 L42.6 297.8 L45.6 299.4 L45.6 302.8 L42.6 304.4 L39.6 302.8 Z M39.6 299.4 L42.6 301 L45.6 299.4 M42.6 301 L42.6 304.4" fill="#f1f1f1" stroke="#d2d2d2" stroke-width="0.6" />
<path d="M39.6 310.79999999999995 L42.6 309.2 L45.6 310.79999999999995 L45.6 314.2 L42.6 315.79999999999995 L39.6 314.2 Z M39.6 310.79999999999995 L42.6 312.4 L45.6 310.79999999999995 M42.6 312.4 L42.6 315.79999999999995" fill="#f1f1f1" stroke="#d2d2d2" stroke-width="0.6" />
<path d="M39.6 322.2 L42.6 320.6 L45.6 322.2 L45.6 325.6 L42.6 327.2 L39.6 325.6 Z M39.6 322.2 L42.6 323.8 L45.6 322.2 M42.6 323.8 L42.6 327.2" fill="#f1f1f1" stroke="#d2d2d2" stroke-width="0.6" />
<path d="M39.6 333.59999999999997 L42.6 332.0 L45.6 333.59999999999997 L45.6 337.0 L42.6 338.59999999999997 L39.6 337.0 Z M39.6 333.59999999999997 L42.6 335.2 L45.6 333.59999999999997 M42.6 335.2 L42.6 338.59999999999997" fill="#f1f1f1" stroke="#d2d2d2" stroke-width="0.6" />
<path d="M39.6 345.0 L42.6 343.40000000000003 L45.6 345.0 L45.6 348.40000000000003 L42.6 350.0 L39.6 348.40000000000003 Z M39.6 345.0 L42.6 346.6 L45.6 345.0 M42.6 346.6 L42.6 350.0" fill="#f1f1f1" stroke="#d2d2d2" stroke-width="0.6" />
<path d="M39.6 356.4 L42.6 354.8 L45.6 356.4 L45.6 359.8 L42.6 361.4 L39.6 359.8 Z M39.6 356.4 L42.6 358 L45.6 356.4 M42.6 358 L42.6 361.4" fill="#f1f1f1" stroke="#d2d2d2" stroke-width="0.6" />
<path d="M39.6 367.79999999999995 L42.6 366.2 L45.6 367.79999999999995 L45.6 371.2 L42.6 372.79999999999995 L39.6 371.2 Z M39.6 367.79999999999995 L42.6 369.4 L45.6 367.79999999999995 M42.6 369.4 L42.6 372.79999999999995" fill="#f1f1f1" stroke="#d2d2d2" stroke-width="0.6" />
<line x1="37.6" y1="376.6" x2="50" y2="376.6" stroke="#b9b9b9" stroke-width="0.7" />
<path d="M39.6 387.6 L39.6 381 L43.6 381 M39.6 387.6 L46.2 387.6" fill="none" stroke="#2b5674" stroke-width="0.8" />
<path d="M42.6 387 L44.6 383.4 L46.0 387 Z" fill="#fff" stroke="#222" stroke-width="0.5" />
<circle cx="39.6" cy="381" r="0.9" fill="#d98a2b" />
<path d="M39.6 399 L39.6 392.6 L43.6 392.6 M39.6 399 L46.2 399 M41.6 397 L45.2 393.6" fill="none" stroke="#c9c9c9" stroke-width="0.8" />
<rect x="39.2" y="403" width="6.8" height="5" fill="#fdfdfd" stroke="#2b5674" stroke-width="0.9" />
<path d="M40.0 408 L40.0 410.6 M45.2 408 L45.2 410.6" fill="none" stroke="#2b5674" stroke-width="0.8" />
<path d="M40.2 411.6 L42.0 409.4 L39.0 409.4 Z" fill="#222" />
<rect x="39.2" y="414.4" width="4.6" height="4.6" fill="#6f8ea3" stroke="#2b5674" stroke-width="0.6" />
<rect x="41.800000000000004" y="417" width="4.4" height="4.4" fill="url(#gb)" stroke="#2b5674" stroke-width="0.6" />
<rect x="39.2" y="425.8" width="4.6" height="4.6" fill="#d9dee2" stroke="#66727b" stroke-width="0.6" />
<rect x="41.800000000000004" y="428.4" width="4.4" height="4.4" fill="url(#gb)" stroke="#2b5674" stroke-width="0.6" />
<rect x="56.6" y="62.8" width="99" height="429" fill="#f7f7f7" />
<line x1="155.8" y1="61" x2="155.8" y2="492" stroke="#b9b9b9" stroke-width="0.7" />
<line x1="157.2" y1="61" x2="157.2" y2="492" stroke="#dadada" stroke-width="0.6" />
<circle cx="105.2" cy="65.2" r="0.7" fill="#9a9a9a" />
<rect x="57" y="71.6" width="81" height="10.8" fill="#d6d6d6" />
<rect x="74.4" y="71.6" width="17.5" height="10.8" fill="#f7f7f7" />
<line x1="57" y1="71.6" x2="57" y2="82.4" stroke="#b0b0b0" stroke-width="0.6" />
<line x1="74.4" y1="71.6" x2="74.4" y2="82.4" stroke="#b0b0b0" stroke-width="0.6" />
<line x1="91.9" y1="71.6" x2="91.9" y2="82.4" stroke="#b0b0b0" stroke-width="0.6" />
<line x1="109.8" y1="71.6" x2="109.8" y2="82.4" stroke="#b0b0b0" stroke-width="0.6" />
<line x1="128.3" y1="71.6" x2="128.3" y2="82.4" stroke="#b0b0b0" stroke-width="0.6" />
<line x1="57" y1="82.4" x2="74.4" y2="82.4" stroke="#b0b0b0" stroke-width="0.6" />
<line x1="91.9" y1="82.4" x2="155" y2="82.4" stroke="#b0b0b0" stroke-width="0.6" />
<line x1="57" y1="71.6" x2="155" y2="71.6" stroke="#c4c4c4" stroke-width="0.5" />
<path d="M61.6 76 L65.6 73.6 L69 75.2 L70 78.6 L67 80.6 L63.4 79.4 Z" fill="#e8c23e" stroke="#8a6a14" stroke-width="0.6" />
<rect x="79.6" y="73.4" width="7.2" height="7.2" fill="#fff" stroke="#2b5674" stroke-width="0.8" />
<rect x="79.6" y="73.4" width="2.4" height="7.2" fill="#2b5674" />
<line x1="82.8" y1="75.4" x2="86" y2="75.4" stroke="#2b5674" stroke-width="0.6" />
<line x1="82.8" y1="77.2" x2="86" y2="77.2" stroke="#2b5674" stroke-width="0.6" />
<line x1="82.8" y1="79" x2="86" y2="79" stroke="#2b5674" stroke-width="0.6" />
<rect x="97.4" y="73.4" width="5.6" height="7.4" fill="none" stroke="#333" stroke-width="0.6" />
<line x1="98.6" y1="73.4" x2="98.6" y2="80.8" stroke="#333" stroke-width="0.5" />
<circle cx="101.2" cy="76" r="1" fill="none" stroke="#333" stroke-width="0.5" />
<circle cx="101.2" cy="79" r="1" fill="none" stroke="#333" stroke-width="0.5" />
<circle cx="118.6" cy="77" r="2.6" fill="none" stroke="#222" stroke-width="0.7" />
<line x1="118.6" y1="73.2" x2="118.6" y2="80.8" stroke="#222" stroke-width="0.7" />
<line x1="114.8" y1="77" x2="122.4" y2="77" stroke="#222" stroke-width="0.7" />
<circle cx="135.4" cy="77" r="3.6" fill="#3f7fd0" />
<path d="M135.4 77 L135.4 73.4 A3.6 3.6 0 0 0 132 78.4 Z" fill="#e8503a" />
<path d="M135.4 77 L132 78.4 A3.6 3.6 0 0 0 137.4 80 Z" fill="#f0c43a" />
<path d="M135.4 77 L137.4 80 A3.6 3.6 0 0 0 139 76.6 Z" fill="#4aa84a" />
<rect x="137.6" y="71.2" width="18" height="11.6" fill="#f7f7f7" />
<rect x="138.4" y="72" width="7.4" height="10" fill="#f1f1f1" stroke="#bdbdbd" stroke-width="0.5" />
<path d="M140.8 77 L142.6 75.7 L142.6 78.3 Z" fill="#222" />
<rect x="147.2" y="72" width="8" height="10" fill="#f1f1f1" stroke="#bdbdbd" stroke-width="0.5" />
<path d="M152.2 77 L150.4 75.7 L150.4 78.3 Z" fill="#222" />
<text x="100.4" y="92.09" font-size="5.8" fill="#111" text-anchor="middle" font-weight="bold" textLength="29.6" lengthAdjust="spacingAndGlyphs" >自動ｻｰﾌｪｽ</text>
<circle cx="147" cy="90" r="3" fill="none" stroke="#2b5674" stroke-width="0.7" />
<text x="147" y="91.83" font-size="4.8" fill="#2b5674" text-anchor="middle" font-weight="bold" >?</text>
<path d="M60.2 101.2 L62 103.2 L66 98.6" fill="none" stroke="#3d9a2e" stroke-width="1.1" />
<path d="M72.8 99 L77 103.4 M77 99 L72.8 103.4" fill="none" stroke="#c8312a" stroke-width="1" />
<line x1="58.8" y1="110.6" x2="153.6" y2="110.6" stroke="#cfcfcf" stroke-width="0.7" />
<text x="59.6" y="119.09" font-size="5.8" fill="#111" font-weight="bold" textLength="36.4" lengthAdjust="spacingAndGlyphs" >ｱｸﾃｨﾌﾞなﾒｯｼｭ</text>
<path d="M148 118 L150 116 L152 118" fill="none" stroke="#333" stroke-width="0.7" />
<line x1="58.8" y1="127.2" x2="153.6" y2="127.2" stroke="#cfcfcf" stroke-width="0.7" />
<text x="59.6" y="136.49" font-size="5.8" fill="#111" font-weight="bold" textLength="30.4" lengthAdjust="spacingAndGlyphs" >ｻｰﾌｪｽ作成</text>
<path d="M148 135.4 L150 133.4 L152 135.4" fill="none" stroke="#333" stroke-width="0.7" />
<text x="59.6" y="144.74" font-size="5.4" fill="#1a1a1a" textLength="26.6" lengthAdjust="spacingAndGlyphs" >形状の詳細</text>
<rect x="60.4" y="150.4" width="89" height="9.2" fill="#e3e3e3" stroke="#b0b0b0" stroke-width="0.6" />
<text x="62" y="157.04" font-size="5.4" fill="#222" textLength="19.4" lengthAdjust="spacingAndGlyphs" >Balanced</text>
<path d="M143.6 154.20000000000002 L145.4 156.0 L147.2 154.20000000000002" fill="none" stroke="#444" stroke-width="0.6" />
<text x="59.6" y="167.54" font-size="5.4" fill="#1a1a1a" textLength="21.4" lengthAdjust="spacingAndGlyphs" >制御点数</text>
<rect x="60.4" y="173.6" width="89" height="9.2" fill="#e3e3e3" stroke="#b0b0b0" stroke-width="0.6" />
<text x="62" y="180.24" font-size="5.4" fill="#222" textLength="16.4" lengthAdjust="spacingAndGlyphs" >Medium</text>
<path d="M143.6 177.4 L145.4 179.2 L147.2 177.4" fill="none" stroke="#444" stroke-width="0.6" />
<rect x="60.4" y="186.4" width="81" height="9.2" fill="#e1e4e8" stroke="#c6c9cd" stroke-width="0.6" />
<text x="62" y="192.97" font-size="5.2" fill="#a9a9a9" textLength="11" lengthAdjust="spacingAndGlyphs" >2000</text>
<path d="M144.6 189.6 L146 188.0 L147.4 189.6" fill="none" stroke="#9a9a9a" stroke-width="0.6" />
<path d="M144.6 192.4 L146 194.0 L147.4 192.4" fill="none" stroke="#9a9a9a" stroke-width="0.6" />
<text x="59.6" y="205.14" font-size="5.4" fill="#1a1a1a" textLength="8.4" lengthAdjust="spacingAndGlyphs" >ﾐﾗｰ</text>
<rect x="60.4" y="210.8" width="89" height="9.2" fill="#e3e3e3" stroke="#b0b0b0" stroke-width="0.6" />
<text x="62" y="217.44" font-size="5.4" fill="#222" textLength="22.4" lengthAdjust="spacingAndGlyphs" >Top Plane</text>
<path d="M143.6 214.60000000000002 L145.4 216.4 L147.2 214.60000000000002" fill="none" stroke="#444" stroke-width="0.6" />
<rect x="60.4" y="224.2" width="5" height="5" fill="#fbfbfb" stroke="#c9c9c9" stroke-width="0.6" />
<text x="67.4" y="228.74" font-size="5.4" fill="#9c9c9c" textLength="72.6" lengthAdjust="spacingAndGlyphs" >選択した三角形ﾒｯｼｭからのみ抽出</text>
<rect x="85.2" y="234" width="44.6" height="8.6" fill="#e6e6e6" stroke="#a9a9a9" stroke-width="0.6" />
<text x="107.5" y="240.42" font-size="5.6" fill="#111" text-anchor="middle" textLength="18" lengthAdjust="spacingAndGlyphs" >ﾌﾟﾚﾋﾞｭｰ</text>
<line x1="58.8" y1="248.2" x2="153.6" y2="248.2" stroke="#cfcfcf" stroke-width="0.7" />
<text x="59.6" y="256.69" font-size="5.8" fill="#111" font-weight="bold" textLength="11.4" lengthAdjust="spacingAndGlyphs" >解析</text>
<path d="M148 255.6 L150 253.6 L152 255.6" fill="none" stroke="#333" stroke-width="0.7" />
<rect x="60.4" y="260.8" width="5.2" height="5.2" fill="#ffffff" stroke="#333" stroke-width="0.7" />
<text x="67.4" y="265.62" font-size="5.6" fill="#111" textLength="10.8" lengthAdjust="spacingAndGlyphs" >偏差</text>
<text x="59.6" y="275.74" font-size="5.4" fill="#a5a5a5" textLength="28" lengthAdjust="spacingAndGlyphs" >許容差 (+/-)</text>
<rect x="60.4" y="281.6" width="81" height="9.2" fill="#e1e4e8" stroke="#c6c9cd" stroke-width="0.6" />
<text x="62" y="288.17" font-size="5.2" fill="#a9a9a9" textLength="17.4" lengthAdjust="spacingAndGlyphs" >0.05mm</text>
<path d="M144.6 284.8 L146 283.20000000000005 L147.4 284.8" fill="none" stroke="#9a9a9a" stroke-width="0.6" />
<path d="M144.6 287.6 L146 289.20000000000005 L147.4 287.6" fill="none" stroke="#9a9a9a" stroke-width="0.6" />
<rect x="85.2" y="295.4" width="44.6" height="8.4" fill="#c9c9c9" stroke="#b9b9b9" stroke-width="0.5" />
<text x="107.5" y="301.64" font-size="5.4" fill="#8e8e8e" text-anchor="middle" textLength="10.4" lengthAdjust="spacingAndGlyphs" >適用</text>
<rect x="156.4" y="263.4" width="3.6" height="13.6" fill="#f4f4f4" stroke="#b9b9b9" stroke-width="0.5" />
<circle cx="158.2" cy="270.2" r="0.6" fill="none" stroke="#555" stroke-width="0.4" />
<defs>
<clipPath id="mclip"><path d="M245.6 282 C245.8 277.3 246.7 272.7 247.9 268 C249.1 263.3 250.7 258.1 252.9 253.6 C255.2 249.0 256.4 245.5 261.4 240.7 C266.4 235.9 276.5 230.1 282.9 225 C289.3 219.9 293.8 215.2 300 210.4 C306.2 205.6 313.3 200.9 320 196 C326.7 191.1 333.3 186.0 340 181 C346.7 176.0 355.5 169.7 360 166 C364.5 162.3 365.0 160.8 367 158.6 C369.0 156.4 369.8 154.4 372 152.6 C374.2 150.8 377.3 149.6 380 148 C382.7 146.4 385.7 144.9 388 143.2 C390.3 141.5 391.6 139.5 393.6 137.6 C395.6 135.7 397.6 133.6 400 132 C402.4 130.4 405.2 128.9 408 128 C410.8 127.1 413.5 126.6 416.8 126.4 C420.1 126.2 425.0 126.4 428 126.9 C431.0 127.4 432.8 129.0 435 129.2 C437.2 129.4 438.9 128.0 441.4 128.1 C443.9 128.2 446.2 128.3 450 129.8 C453.8 131.3 459.7 134.3 464 137 C468.3 139.7 472.0 143.2 476 146 C480.0 148.8 484.7 151.1 488 153.6 C491.3 156.1 493.3 158.3 496 161 C498.7 163.7 501.3 167.2 504 170 C506.7 172.8 509.7 175.2 512 178 C514.3 180.8 516.0 183.7 518 187 C520.0 190.3 522.2 193.8 524 198 C525.8 202.2 527.7 208.0 529 212 C530.3 216.0 531.3 218.8 532 222 C532.7 225.2 533.4 228.3 533.4 231 C533.4 233.7 533.0 235.8 532 238 C531.0 240.2 527.6 244.2 527.6 244.2 C527.6 244.2 530.4 248.4 531.4 251 C532.4 253.6 533.4 256.8 533.6 260 C533.8 263.2 533.2 266.8 532.4 270 C531.6 273.2 530.4 276.3 529 279 C527.6 281.7 525.8 283.8 524 286 C522.2 288.2 520.7 289.7 518 292 C515.3 294.3 512.8 295.8 508 299.6 C503.2 303.5 498.5 307.4 489 315.1 C479.5 322.9 463.7 335.8 451 346.1 C438.3 356.4 421.5 370.2 413 377.1 C404.5 384.0 403.2 385.1 400 387.7 C396.8 390.2 396.0 390.9 394 392.4 C392.0 393.8 390.0 395.2 388 396.4 C386.0 397.6 385.0 398.4 382 399.4 C379.0 400.4 374.3 402.1 370 402.6 C365.7 403.1 360.3 403.2 356 402.6 C351.7 402.0 348.3 400.8 344 399 C339.7 397.2 334.7 394.7 330 392 C325.3 389.3 320.7 386.0 316 383 C311.3 380.0 306.3 376.8 302 374 C297.7 371.2 293.0 367.9 290 366 C287.0 364.1 284.0 362.4 284 362.4 C284.0 362.4 272.0 358.0 272 358 C272.0 358.0 266.8 348.0 265 344 C263.2 340.0 262.7 337.7 261 334 C259.3 330.3 256.8 326.0 255 322 C253.2 318.0 251.4 314.3 250 310 C248.6 305.7 247.3 300.7 246.6 296 C245.9 291.3 245.4 286.7 245.6 282 Z"/></clipPath>
<filter id="b4" x="-30%" y="-30%" width="160%" height="160%"><feGaussianBlur stdDeviation="3.2"/></filter>
<filter id="b3" x="-30%" y="-30%" width="160%" height="160%"><feGaussianBlur stdDeviation="2.3"/></filter>
<filter id="b2" x="-30%" y="-30%" width="160%" height="160%"><feGaussianBlur stdDeviation="1.6"/></filter>
<filter id="b1" x="-30%" y="-30%" width="160%" height="160%"><feGaussianBlur stdDeviation="0.8"/></filter>
<linearGradient id="gface" gradientUnits="userSpaceOnUse" x1="262" y1="280" x2="392" y2="372"><stop offset="0" stop-color="#52738b"/><stop offset="0.45" stop-color="#587a93"/><stop offset="0.8" stop-color="#4a6b84"/><stop offset="1" stop-color="#3d5a71"/></linearGradient>
<linearGradient id="gshaft" gradientUnits="userSpaceOnUse" x1="268" y1="350" x2="280.4" y2="365.6"><stop offset="0" stop-color="#2b4254"/><stop offset="0.42" stop-color="#2d475a"/><stop offset="0.52" stop-color="#315a78"/><stop offset="0.9" stop-color="#325d7d"/><stop offset="1" stop-color="#447ba6"/></linearGradient>
</defs>
<g id="motor">
<path d="M245.6 282 C245.8 277.3 246.7 272.7 247.9 268 C249.1 263.3 250.7 258.1 252.9 253.6 C255.2 249.0 256.4 245.5 261.4 240.7 C266.4 235.9 276.5 230.1 282.9 225 C289.3 219.9 293.8 215.2 300 210.4 C306.2 205.6 313.3 200.9 320 196 C326.7 191.1 333.3 186.0 340 181 C346.7 176.0 355.5 169.7 360 166 C364.5 162.3 365.0 160.8 367 158.6 C369.0 156.4 369.8 154.4 372 152.6 C374.2 150.8 377.3 149.6 380 148 C382.7 146.4 385.7 144.9 388 143.2 C390.3 141.5 391.6 139.5 393.6 137.6 C395.6 135.7 397.6 133.6 400 132 C402.4 130.4 405.2 128.9 408 128 C410.8 127.1 413.5 126.6 416.8 126.4 C420.1 126.2 425.0 126.4 428 126.9 C431.0 127.4 432.8 129.0 435 129.2 C437.2 129.4 438.9 128.0 441.4 128.1 C443.9 128.2 446.2 128.3 450 129.8 C453.8 131.3 459.7 134.3 464 137 C468.3 139.7 472.0 143.2 476 146 C480.0 148.8 484.7 151.1 488 153.6 C491.3 156.1 493.3 158.3 496 161 C498.7 163.7 501.3 167.2 504 170 C506.7 172.8 509.7 175.2 512 178 C514.3 180.8 516.0 183.7 518 187 C520.0 190.3 522.2 193.8 524 198 C525.8 202.2 527.7 208.0 529 212 C530.3 216.0 531.3 218.8 532 222 C532.7 225.2 533.4 228.3 533.4 231 C533.4 233.7 533.0 235.8 532 238 C531.0 240.2 527.6 244.2 527.6 244.2 C527.6 244.2 530.4 248.4 531.4 251 C532.4 253.6 533.4 256.8 533.6 260 C533.8 263.2 533.2 266.8 532.4 270 C531.6 273.2 530.4 276.3 529 279 C527.6 281.7 525.8 283.8 524 286 C522.2 288.2 520.7 289.7 518 292 C515.3 294.3 512.8 295.8 508 299.6 C503.2 303.5 498.5 307.4 489 315.1 C479.5 322.9 463.7 335.8 451 346.1 C438.3 356.4 421.5 370.2 413 377.1 C404.5 384.0 403.2 385.1 400 387.7 C396.8 390.2 396.0 390.9 394 392.4 C392.0 393.8 390.0 395.2 388 396.4 C386.0 397.6 385.0 398.4 382 399.4 C379.0 400.4 374.3 402.1 370 402.6 C365.7 403.1 360.3 403.2 356 402.6 C351.7 402.0 348.3 400.8 344 399 C339.7 397.2 334.7 394.7 330 392 C325.3 389.3 320.7 386.0 316 383 C311.3 380.0 306.3 376.8 302 374 C297.7 371.2 293.0 367.9 290 366 C287.0 364.1 284.0 362.4 284 362.4 C284.0 362.4 272.0 358.0 272 358 C272.0 358.0 266.8 348.0 265 344 C263.2 340.0 262.7 337.7 261 334 C259.3 330.3 256.8 326.0 255 322 C253.2 318.0 251.4 314.3 250 310 C248.6 305.7 247.3 300.7 246.6 296 C245.9 291.3 245.4 286.7 245.6 282 Z" fill="#2e4352"/>
<g clip-path="url(#mclip)">
<path d="M258 244 L283 225 L320 196 L360 166 L380 150 L384 154 L364 171 L324 201 L288 230 L263 250 Z" fill="#38546a" filter="url(#b2)"/>
<path d="M250 258 L258 246 L266 241 L272 246 L267 262 L254 268 Z" fill="#37546b" filter="url(#b2)"/>
<path d="M236 270 L256 265.6 L285 270 L310 281.6 L332 291.6 L351 302.6 L365 320 L377 336 L390 348 L403 355 L402 372 L398 392 L384 404 L365 410 L345 408 L325 398 L295 378 L262 362 L248 335 L236 300 Z" fill="url(#gface)" filter="url(#b3)"/>
<path d="M268 356 L284 364 L302 376 L316 385 L330 394 L344 401 L356 404.4 L370 404.4 L382 401 L395 393.6 L404 384" fill="none" stroke="#2d475b" stroke-width="15" filter="url(#b4)" opacity="0.95"/>
<path d="M257 246 L250 258 L246.4 270 L245 282 L246 296 L250 311 L256 324 L262 336 L268 347" fill="none" stroke="#2f4b60" stroke-width="3.6" filter="url(#b1)" opacity="0.75"/>
</g>
<g clip-path="url(#mclip)"><path d="M500 166 L520 190 L532 222 L533 234 L528 245 L533.6 260 L530 280 L518 293 L508 300" fill="none" stroke="#3a5a72" stroke-width="1.6" filter="url(#b1)"/></g>
<g clip-path="url(#mclip)">
<path d="M411 150.6 L415 149.4 L466 181.4 L466 187.6 L461 187.4 L410.4 156.6 Z" fill="#4f6e85" filter="url(#b2)"/>
<path d="M414 152.6 L440 167.4 L463 183.6" fill="none" stroke="#86a2b6" stroke-width="3" stroke-linecap="round" filter="url(#b1)" opacity="0.8"/>
<path d="M461 150.4 L469 154.6" fill="none" stroke="#4d6a80" stroke-width="2" stroke-linecap="round" filter="url(#b1)"/>
<path d="M486 184 C489 181.4 494 180.6 499 181.6" fill="none" stroke="#5a7890" stroke-width="1.6" stroke-linecap="round" filter="url(#b1)"/>
<path d="M398 142 L406 137" fill="none" stroke="#4a677d" stroke-width="2" stroke-linecap="round" filter="url(#b1)"/>
</g>
<g>
<ellipse cx="304.6" cy="333.6" rx="22.5" ry="30.5" transform="rotate(-36 304.6 333.6)" fill="#2f4a5f"/>
<ellipse cx="304.6" cy="333.6" rx="22.5" ry="30.5" transform="rotate(-36 304.6 333.6)" fill="none" stroke="#3b5a72" stroke-width="1.2" filter="url(#b1)"/>
<ellipse cx="297" cy="337.6" rx="17" ry="29" transform="rotate(-38 297 337.6)" fill="#4a6c86"/>
<ellipse cx="296.6" cy="338" rx="11.2" ry="21.8" transform="rotate(-38 296.6 338)" fill="#37566e"/>
<path d="M304 331 C309 338 311 347 308.6 355" fill="none" stroke="#55799a" stroke-width="2.4" stroke-linecap="round" filter="url(#b1)" opacity="0.85"/>
<ellipse cx="297.6" cy="336.6" rx="5.4" ry="12" transform="rotate(-38 297.6 336.6)" fill="#2f4b61"/>
<path d="M279 322 C280.6 315 286 311.6 293 312.6" fill="none" stroke="#5f84a0" stroke-width="2" stroke-linecap="round" filter="url(#b1)" opacity="0.8"/>
</g>
<path d="M241.7 371.5 L296 326 A4.5 11.8 -38 0 1 308 346 L256.6 385.2 C253 387.6 249 387.4 245.4 384.2 C242.2 381 241 376 241.7 371.5 Z" fill="url(#gshaft)"/>
<path d="M241.7 371.5 L254.3 374.3 L256.6 385.2 C253 387.6 249 387.4 245.4 384.2 C242.2 381 241 376 241.7 371.5 Z" fill="#3a6483"/>
<g clip-path="url(#mclip)" fill="none" stroke="#2a8ac6" stroke-width="0.85" stroke-linejoin="round" stroke-linecap="round" opacity="0.92">
<path d="M287.9 245 L306 231 L380 177 L398.6 162.9 L410.7 157.9"/>
<path d="M287.9 245 L292.9 252 L304.3 260.7 L325.7 272 L340 279.3 L349 285 L357 287"/>
<path d="M357 287 L366 280 L440 213.6 L458.6 199.3 L464.3 189.3"/>
<path d="M361 166.6 L380 177"/>
<path d="M287.9 245 L275.7 243.6 L267 245 L261.4 247.9 L256 254"/>
<path d="M289.3 249.3 L281.4 252 L272.9 255.7 L266.4 261"/>
<path d="M261.4 247.9 C262 253 263.5 257 266.4 261"/>
<path d="M266.4 261 L277 268 L297 278 L318 291"/>
<path d="M255.7 263.6 L261.4 275.7 L269.7 285 L277 294 L283.5 302.2 L288 307.9"/>
<path d="M266.4 262 L272.9 278.6 L277.8 285 L285.8 297.6 L290.3 305.6"/>
<path d="M245.7 283 L251.4 285 L266.3 297.6 L280 311.3 L282.3 313.6"/>
<path d="M257.2 329 L266.3 332.5 L276.6 332"/>
<path d="M266.4 262 L255.7 263.6 C252 270 249 276 247 283"/>
<path d="M255.7 263.6 L254.3 257 L252.9 253.6"/>
<path d="M318 291 L330 298.6 L349.3 312.9 L365 315.7"/>
<path d="M348.6 285.7 L347 294.3 L347.9 305.7 L349.3 312.9"/>
<path d="M349.3 312.9 L330 320 L324 322"/>
<path d="M357 287.9 L360 298.6 L365.7 314.3 L372.9 327 L380 342 L390 352 L397 352"/>
<path d="M330 330 L362.9 328.6 L372.9 327"/>
<path d="M365.7 280.7 L375.7 288.6 L384.3 301.4 L388.6 308.6 L392.9 321.4 L401.4 342 L402 348"/>
<path d="M318.4 325 Q 334 318 349.3 312.9"/>
<path d="M321.6 332.9 Q 345 328 372.9 327"/>
<path d="M328 338 Q 350 332 372 333 T 398 352"/>
<path d="M322 352 Q 352 370 380 366 T 398 357"/>
<path d="M316 362 Q 336 378 366 390 L388 390.6 L397.6 370"/>
<path d="M310 368 Q 324 386 344 399"/>
<path d="M350 377 L356 402"/>
<path d="M376 288.6 L440 232 L468.6 209.3 L477 196.4 L477.9 190.7 L470.7 179.3 L465.8 174 L442.9 159.5 L414.5 144.8"/>
<path d="M379 290.5 L440 237.9 L472.9 212 L482.9 200.7 L486.4 192.9"/>
<path d="M388 308 L420 284 L468.6 247 L495.7 215 L501.4 209.3 L514.3 196.4 L517.9 190.7"/>
<path d="M401 344 L414 328 L442 301 L480 270 L501.4 247 L527 220.7"/>
<path d="M410 350 L434 327 L466 301 L489.2 280 L497.9 264.4 L512 248.7 L526.3 242.4"/>
<path d="M408 357 L446 330 L480 305 L486.8 292.8"/>
<path d="M404 370 L440 342 L478 316 L484 304.5 L486.8 292.8 L489.2 280"/>
<path d="M393 390 L398 368 L400 357"/>
<path d="M397 350 C403 344 409 350 408 358 C407 366 400 372 396.6 368 C394 362 394 354 397 350 Z"/>
<path d="M399 352 L404 358 L398 366"/>
<path d="M501.8 275 C505 274 510 277 512 281.8 L511.3 291.3 L506 300"/>
<path d="M496.3 304.5 L502.6 288 L501.8 278.6 L505.8 261.3 L515.2 251.8 L527.8 244.7"/>
<path d="M489.2 280 L481.3 266.8"/>
<path d="M517.6 254.2 L523 260.5 L532.6 264.4"/>
<path d="M522.3 251 L526.3 256.6 L531.8 259"/>
<path d="M440.8 128.9 C436 130.5 433.5 134 432.8 138 L454.3 151.5 L472.6 162 C477 167 481 172 483 177 L484.5 186 L486.4 192.9"/>
<path d="M412.2 148.3 L466 179.7"/>
<path d="M430.5 136.9 L436 130.6"/>
<path d="M473.8 162.2 L487.5 154.7"/>
<path d="M477.2 165.6 L489.8 158.2"/>
<path d="M480.6 169 L491 161.6"/>
<path d="M487.5 154.7 L495 167 L500.7 175.7 L510.7 184.3 L515 188.6"/>
<path d="M486.4 192.9 C489 187 494 183 498.6 182 L514.3 187.9"/>
<path d="M482.9 189.3 C485 184 488 182 491.4 181.4"/>
<path d="M486.4 192.9 L497 203.6 L501.4 209.3"/>
<path d="M463.6 181 L464.3 189.3"/>
<path d="M410.7 157.9 L464.3 189.3"/>
<path d="M384 147.6 L392 156 L398.4 161.6"/>
<path d="M389.2 144 L395.2 150.4 L401.6 159.2"/>
<path d="M395.2 138 L400 145.6 L404 153.6 L405.6 159.2"/>
<path d="M402.4 132.8 L404 138.4 L407.2 146.4 L410.4 150.4"/>
<path d="M389.2 144 L398.4 141.2 L406.4 136 L413.6 131.2"/>
<path d="M392.8 148 L402.4 146.4 L409.6 142.4 L416.8 136"/>
<path d="M398.4 150.4 L405.6 148.8 L412 147.2"/>
<path d="M410.4 150.4 L412 144 L416.8 137.6 L423.2 132.8 L432.8 130.6"/>
</g>
<path d="M412.8 143.6 L423.2 137.2" fill="none" stroke="#0d1a24" stroke-width="0.8" stroke-dasharray="1.6 1"/>
<path d="M389 142.4 L393.6 137.6 L400 132 L408 128 L416.8 126.4 L428 126.9 L435 129 L442 128 L452 130 L464 137 L476 146 L488 153.6 L496 161 L504 170 L512 178 L518 187 L524 198 L529 212 L532 222 L533 230 L532 238 L529 243 L528 245 L532 252 L533.6 260 L532.4 270 L529 279 L524 286 L518 292 L508 299 L394 392" fill="none" stroke="#2b7fb4" stroke-width="0.7" opacity="0.8"/>
<g fill="none" stroke="#2a8ac6" stroke-width="0.7" opacity="0.9">
<path d="M254.3 374.3 L297.3 340.3"/>
<path d="M254.9 376.8 L297.9 342.8"/>
<path d="M255.5 379.6 L298.5 345.6"/>
<path d="M256 382.4 L299.0 348.4"/>
<path d="M241.7 371.5 L254.3 374.3 L256.6 385.2"/>
<path d="M242 377.8 L254.9 376.8 M244.6 383 L255.5 379.6"/>
<path d="M284.2 313.6 A17 29 -38 0 0 309.8 361.6" />
<path d="M288.2 319.6 A12.6 23.6 -38 0 0 304.6 356.6" opacity="0.7"/>
<path d="M283.7 309.2 C289 304 299.5 303.5 309 308" opacity="0.8"/>
<path d="M300 328 L318.4 325 M303 334 L321.6 332.9 M305.6 341 L326 342 M297 324 L313 315.6 M306 348 L323 356"/>
</g>
</g>
<path d="M160 65.4 L162 67 L160 68.6 Z" fill="#222" />
<path d="M166.6 66.4 L170 64 L173.4 65.4 L174.4 68.6 L171.6 70.6 L168 69.6 Z" fill="#e8c23e" stroke="#8a6a14" stroke-width="0.6" />
<text x="177" y="69.14" font-size="5.4" fill="#222" textLength="35" lengthAdjust="spacingAndGlyphs" >2_mortor_ﾘﾊﾞｰｽ</text>
<text x="215.6" y="69.0" font-size="5" fill="#222" textLength="23" lengthAdjust="spacingAndGlyphs" >(ﾃﾞﾌｫﾙﾄ...</text>
<circle cx="362" cy="66" r="2.4" fill="#eaf2f7" stroke="#2b5674" stroke-width="0.8" />
<line x1="360.2" y1="67.8" x2="358.2" y2="70" stroke="#2b5674" stroke-width="1.1" />
<circle cx="373.6" cy="66" r="2.4" fill="#eaf2f7" stroke="#2b5674" stroke-width="0.8" />
<line x1="371.8" y1="67.8" x2="369.8" y2="70" stroke="#2b5674" stroke-width="1.1" />
<rect x="370" y="62.8" width="7" height="6.4" fill="none" stroke="#777" stroke-width="0.4" stroke-dasharray="0.8 0.6"/>
<path d="M380.6 69.6 L385.4 64.6 L387.6 66 L383 70.4 Z" fill="#dfe9ef" stroke="#2b5674" stroke-width="0.6" />
<line x1="380" y1="70.4" x2="384" y2="70.4" stroke="#2b5674" stroke-width="0.6" />
<path d="M391.8 65 L394.4 63.6 L394.4 70 L391.8 71 Z" fill="#3d86b3" stroke="#2b5674" stroke-width="0.5" />
<path d="M395.6 64.4 L398.8 63.2 L398.8 69.4 L395.6 70.6 Z" fill="#dce7ee" stroke="#2b5674" stroke-width="0.5" />
<path d="M403 65.6 L407 63.6 L410 64.8 L410 69.2 L406 71 L403 69.8 Z" fill="#3d86b3" stroke="#2b5674" stroke-width="0.5" />
<rect x="406" y="63" width="3.6" height="3.6" fill="#e9eff3" stroke="#2b5674" stroke-width="0.4" />
<path d="M414 66.8 L416 66.8 L415 68 Z" fill="#444" />
<path d="M421 65 L424.4 63.2 L427.4 64.6 L427.4 69.6 L424 71 L421 69.6 Z" fill="#dce9f1" stroke="#2b5674" stroke-width="0.6" />
<path d="M421 65 L424 66.2 L424 71 L421 69.6 Z" fill="#3d86b3" />
<path d="M431.6 66.8 L433.6 66.8 L432.6 68 Z" fill="#444" />
<path d="M437.4 67 C439 64.4 443 64.4 444.6 67 C443 69.6 439 69.6 437.4 67 Z" fill="#e6e6e6" stroke="#555" stroke-width="0.5" />
<circle cx="441" cy="67" r="1.2" fill="#333" />
<line x1="441" y1="63.4" x2="441" y2="70.6" stroke="#555" stroke-width="0.4" />
<path d="M449 66.8 L451 66.8 L450 68 Z" fill="#444" />
<circle cx="459" cy="66.6" r="3.5" fill="#3f7fd0" />
<path d="M459 66.6 L459 63.1 A3.5 3.5 0 0 0 455.7 68 Z" fill="#e8503a" />
<path d="M459 66.6 L455.7 68 A3.5 3.5 0 0 0 461 69.4 Z" fill="#f0c43a" />
<path d="M459 66.6 L461 69.4 A3.5 3.5 0 0 0 462.5 66.2 Z" fill="#4aa84a" />
<circle cx="470.6" cy="65.8" r="3" fill="#3f7fd0" />
<path d="M470.6 65.8 L470.6 62.8 A3 3 0 0 0 467.8 67 Z" fill="#e8503a" />
<path d="M470.6 65.8 L467.8 67 A3 3 0 0 0 472.4 68.2 Z" fill="#4aa84a" />
<rect x="467.2" y="68.4" width="7" height="2.2" fill="#333" />
<rect x="468.6" y="69" width="1.4" height="1" fill="#fff" />
<rect x="471.2" y="69" width="1.4" height="1" fill="#fff" />
<path d="M478 66.8 L480 66.8 L479 68 Z" fill="#444" />
<rect x="484.4" y="63.6" width="7" height="5" fill="#eef2f5" stroke="#555" stroke-width="0.7" />
<line x1="488" y1="68.6" x2="488" y2="70.4" stroke="#555" stroke-width="0.7" />
<line x1="485.8" y1="70.6" x2="490.2" y2="70.6" stroke="#555" stroke-width="0.7" />
<path d="M495 66.8 L497 66.8 L496 68 Z" fill="#444" />
<rect x="643.6" y="56" width="4.4" height="4.6" fill="none" stroke="#b9b9b9" stroke-width="0.6" />
<line x1="645" y1="56" x2="645" y2="60.6" stroke="#b9b9b9" stroke-width="0.5" />
<rect x="654.8" y="56" width="4.4" height="4.6" fill="none" stroke="#b9b9b9" stroke-width="0.6" />
<line x1="657.8" y1="56" x2="657.8" y2="60.6" stroke="#b9b9b9" stroke-width="0.5" />
<line x1="666" y1="60.2" x2="670.4" y2="60.2" stroke="#b9b9b9" stroke-width="0.7" />
<rect x="677" y="57.4" width="3.8" height="3.4" fill="none" stroke="#b9b9b9" stroke-width="0.6" />
<path d="M678.4 57.4 L678.4 56 L682.4 56 L682.4 59.4 L680.8 59.4" fill="none" stroke="#b9b9b9" stroke-width="0.6" />
<path d="M689 56 L693.4 60.6 M693.4 56 L689 60.6" fill="none" stroke="#b9b9b9" stroke-width="0.7" />
<path d="M655.6 80.4 L659.4 84.6 L667 76.4" fill="none" stroke="#c3dfbd" stroke-width="2.3" />
<path d="M675.6 90 L684.6 98.6 M684.6 90 L675.6 98.6" fill="none" stroke="#f2cbc8" stroke-width="2.4" />
<rect x="688.6" y="73.2" width="11.4" height="63" fill="#cfcfcf" stroke="#9d9d9d" stroke-width="0.6" />
<rect x="689" y="73.6" width="11" height="10.2" fill="#ffffff" />
<line x1="688.6" y1="83.8" x2="700" y2="83.8" stroke="#a9a9a9" stroke-width="0.5" />
<line x1="688.6" y1="94.2" x2="700" y2="94.2" stroke="#a9a9a9" stroke-width="0.5" />
<line x1="688.6" y1="104.8" x2="700" y2="104.8" stroke="#a9a9a9" stroke-width="0.5" />
<line x1="688.6" y1="115.2" x2="700" y2="115.2" stroke="#a9a9a9" stroke-width="0.5" />
<line x1="688.6" y1="125.8" x2="700" y2="125.8" stroke="#a9a9a9" stroke-width="0.5" />
<path d="M690 79 L694.6 75 L699.2 79 M691.4 78.4 L691.4 82.4 L697.8 82.4 L697.8 78.4" fill="none" stroke="#264d6a" stroke-width="0.9" />
<rect x="693.8" y="79.6" width="1.8" height="2.8" fill="#264d6a" />
<path d="M691.4 87.4 L694.6 85.8 L697.8 87.4 L697.8 91.4 L694.6 93 L691.4 91.4 Z M691.4 87.4 L694.6 88.8 L697.8 87.4 M694.6 88.8 L694.6 93" fill="#b4b4b4" stroke="#666" stroke-width="0.5" />
<path d="M690.8 102.8 L690.8 96.6 L693.6 96.6 L694.4 97.6 L698 97.6 L698 99 L699.4 99 L697.6 102.8 Z" fill="#f4f0dc" stroke="#555" stroke-width="0.6" />
<rect x="691" y="107" width="7.6" height="6.4" fill="#c9a84a" stroke="#6a5a2a" stroke-width="0.5" />
<circle cx="693" cy="110.2" r="1.2" fill="#fff" />
<circle cx="696.6" cy="110.2" r="1.2" fill="#fff" />
<circle cx="694.8" cy="120.6" r="3.4" fill="#3f7fd0" />
<path d="M694.8 120.6 L694.8 117.2 A3.4 3.4 0 0 0 691.6 122 Z" fill="#e8503a" />
<path d="M694.8 120.6 L691.6 122 A3.4 3.4 0 0 0 696.8 123.4 Z" fill="#4aa84a" />
<path d="M694.8 120.6 L696.8 123.4 A3.4 3.4 0 0 0 698.2 120.2 Z" fill="#f0c43a" />
<rect x="691" y="127.6" width="7.6" height="6.8" fill="#e9eef2" stroke="#2b5674" stroke-width="0.7" />
<rect x="691" y="127.6" width="2.4" height="6.8" fill="#2b5674" />
<line x1="691" y1="130" x2="698.6" y2="130" stroke="#2b5674" stroke-width="0.5" />
<line x1="691" y1="132.2" x2="698.6" y2="132.2" stroke="#2b5674" stroke-width="0.5" />
<line x1="696" y1="127.6" x2="696" y2="134.4" stroke="#2b5674" stroke-width="0.5" />
<line x1="174.6" y1="466.6" x2="182" y2="460.8" stroke="#d88a82" stroke-width="0.8" />
<path d="M182.6 460.2 L180.2 460.8 L181.6 462.4 Z" fill="#8a2f2a" />
<line x1="174.6" y1="466.6" x2="166.4" y2="461.8" stroke="#1f8a2f" stroke-width="1.3" />
<path d="M164.8 461 L167.6 461 L166.4 463.2 Z" fill="#1f8a2f" />
<line x1="174.6" y1="466.8" x2="174.6" y2="460" stroke="#1c1c86" stroke-width="1.4" />
<path d="M172.8 460.6 L174.6 457.4 L176.4 460.6 Z" fill="#1c1c86" />
<text x="162.4" y="459.21" font-size="2.8" fill="#7fc48a" >y</text>
<text x="184.8" y="458.21" font-size="2.8" fill="#d88a82" >x</text>
<text x="173.9" y="455.01" font-size="2.8" fill="#3a3a9a" >z</text>
<rect x="57" y="492" width="93.4" height="6.8" fill="#d9d9d9" stroke="#b4b4b4" stroke-width="0.5" />
<rect x="57" y="492" width="29" height="6.8" fill="#c3c3c3" stroke="#b0b0b0" stroke-width="0.5" />
<path d="M61 495.4 L63.2 494 L63.2 496.8 Z" fill="#9f9f9f" />
<path d="M67.6 495.4 L69.8 494 L69.8 496.8 Z" fill="#9f9f9f" />
<path d="M76.4 495.4 L74.2 494 L74.2 496.8 Z" fill="#9f9f9f" />
<path d="M83.0 495.4 L80.8 494 L80.8 496.8 Z" fill="#9f9f9f" />
<line x1="59.6" y1="494" x2="59.6" y2="496.8" stroke="#9f9f9f" stroke-width="0.5" />
<line x1="84.4" y1="494" x2="84.4" y2="496.8" stroke="#9f9f9f" stroke-width="0.5" />
<rect x="86.2" y="491.6" width="20" height="7.2" fill="#ffffff" stroke="#b4b4b4" stroke-width="0.5" />
<text x="90.6" y="497.27" font-size="5.2" fill="#111" textLength="10.6" lengthAdjust="spacingAndGlyphs" >ﾓﾃﾞﾙ</text>
<text x="110" y="497.27" font-size="5.2" fill="#222" textLength="32.6" lengthAdjust="spacingAndGlyphs" >ﾓｰｼｮﾝ ｽﾀﾃﾞｨ 1</text>
<rect x="150.6" y="492.4" width="549.4" height="6.2" fill="#fdfdfd" stroke="#c2c2c2" stroke-width="0.6" />
<rect x="0" y="499" width="700" height="8" fill="#f1f1f1" />
<line x1="0" y1="499" x2="700" y2="499" stroke="#cdcdcd" stroke-width="0.6" />
<text x="1" y="505.14" font-size="5.4" fill="#222" textLength="78.6" lengthAdjust="spacingAndGlyphs" >SOLIDWORKS Premium 2021 SP5.1</text>
<text x="560.8" y="505.0" font-size="5" fill="#222" textLength="31.6" lengthAdjust="spacingAndGlyphs" >編集中 :  Part</text>
<text x="648.6" y="505.0" font-size="5" fill="#222" textLength="16.4" lengthAdjust="spacingAndGlyphs" >MMGS</text>
<rect x="678.4" y="502.8" width="1.4" height="1.2" fill="#333" />
<path d="M689.6 503 L693.6 500.6 L697.4 502.2 L697.4 504.2 L693.6 506.2 L689.6 504.8 Z" fill="#e6e6e6" stroke="#555" stroke-width="0.5" />
<circle cx="693.6" cy="503.2" r="1" fill="none" stroke="#555" stroke-width="0.4" />
</svg>
</body>
</html>
